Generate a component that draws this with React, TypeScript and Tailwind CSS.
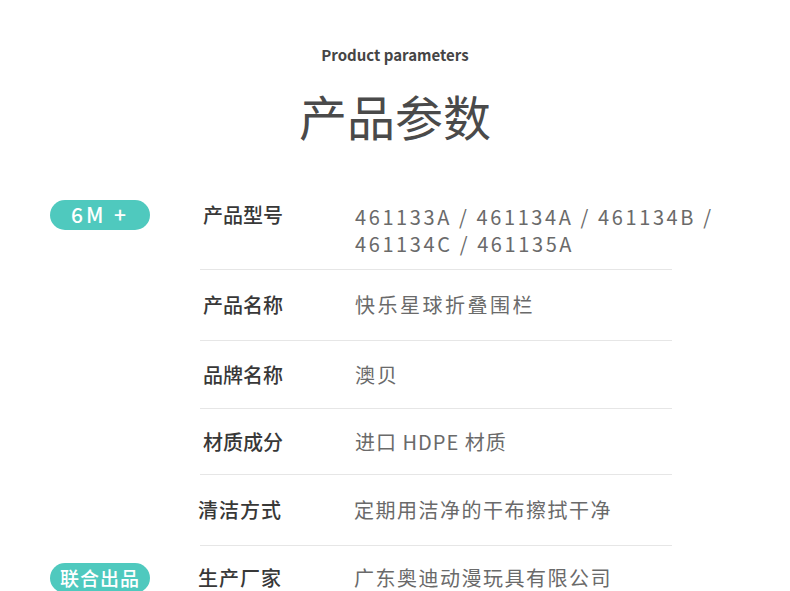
const font = { fontFamily: '"Noto Sans CJK SC", "Noto Sans", sans-serif' }

const rows = [
  { label: '产品名称', value: '快乐星球折叠围栏', h: 'h-[71px] tracking-[2.5px]' },
  { label: '品牌名称', value: '澳贝', h: 'h-[68px] tracking-[2px]' },
  { label: '材质成分', value: '进口 HDPE 材质', h: 'h-[66px] tracking-[1px]' },
]

function Pill({ children, className }: { children: React.ReactNode; className?: string }) {
  return (
    <div
      className={
        'flex h-[30px] w-[100px] items-center justify-center rounded-full bg-[#4fc9be] text-white ' +
        (className || '')
      }
    >
      {children}
    </div>
  )
}

export default function App() {
  return (
    <div className="h-screen w-full overflow-hidden bg-white" style={font}>
      <div className="flex flex-col items-center pt-[44px]">
        <p className="text-[15px] font-bold leading-[22px] text-[#454545]">Product parameters</p>
        <h1 className="mt-[19px] text-[48px] font-normal leading-[60px] text-[#4a4a4a]">产品参数</h1>
      </div>

      <div className="mt-[55px] flex flex-col">
        {/* model row */}
        <div className="flex items-start">
          <div className="w-[200px] shrink-0 pl-[50px]">
            <Pill className="text-[21px] font-medium tracking-[3px]">6M +</Pill>
          </div>
          <div className="flex w-[472px] shrink-0 border-b border-[#e6e6e6] pb-[12px]">
            <div className="w-[155px] shrink-0 pl-[3px] text-[20px] font-medium leading-[30px] text-[#383838]">产品型号</div>
            <div className="whitespace-nowrap pt-[3px] text-[20px] leading-[27px] tracking-[2.6px] text-[#6a6a6a]">
              461133A / 461134A / 461134B /
              <br />
              461134C / 461135A
            </div>
          </div>
        </div>

        {rows.map((r) => (
          <div key={r.label} className="flex">
            <div className="w-[200px] shrink-0" />
            <div className={'flex w-[472px] shrink-0 items-center border-b border-[#e6e6e6] ' + r.h}>
              <div className="w-[155px] shrink-0 pl-[3px] text-[20px] font-medium tracking-normal text-[#383838]">{r.label}</div>
              <div className="whitespace-nowrap text-[20px] text-[#6a6a6a]">{r.value}</div>
            </div>
          </div>
        ))}

        <div className="flex">
          <div className="w-[200px] shrink-0" />
          <div className="flex h-[71px] w-[472px] shrink-0 items-center border-b border-[#e6e6e6]">
            <div className="-ml-[2px] w-[156px] shrink-0 text-[20px] font-medium tracking-[1px] text-[#383838]">清洁方式</div>
            <div className="whitespace-nowrap text-[20px] tracking-[1.5px] text-[#6a6a6a]">定期用洁净的干布擦拭干净</div>
          </div>
        </div>

        <div className="flex">
          <div className="flex w-[200px] shrink-0 items-center pl-[50px]">
            <Pill className="text-[19px] font-medium tracking-[1px]">联合出品</Pill>
          </div>
          <div className="flex h-[64px] w-[472px] shrink-0 items-center">
            <div className="-ml-[2px] w-[156px] shrink-0 text-[20px] font-medium tracking-[1px] text-[#383838]">生产厂家</div>
            <div className="whitespace-nowrap text-[20px] tracking-[1.5px] text-[#6a6a6a]">广东奥迪动漫玩具有限公司</div>
          </div>
        </div>
      </div>
    </div>
  )
}
